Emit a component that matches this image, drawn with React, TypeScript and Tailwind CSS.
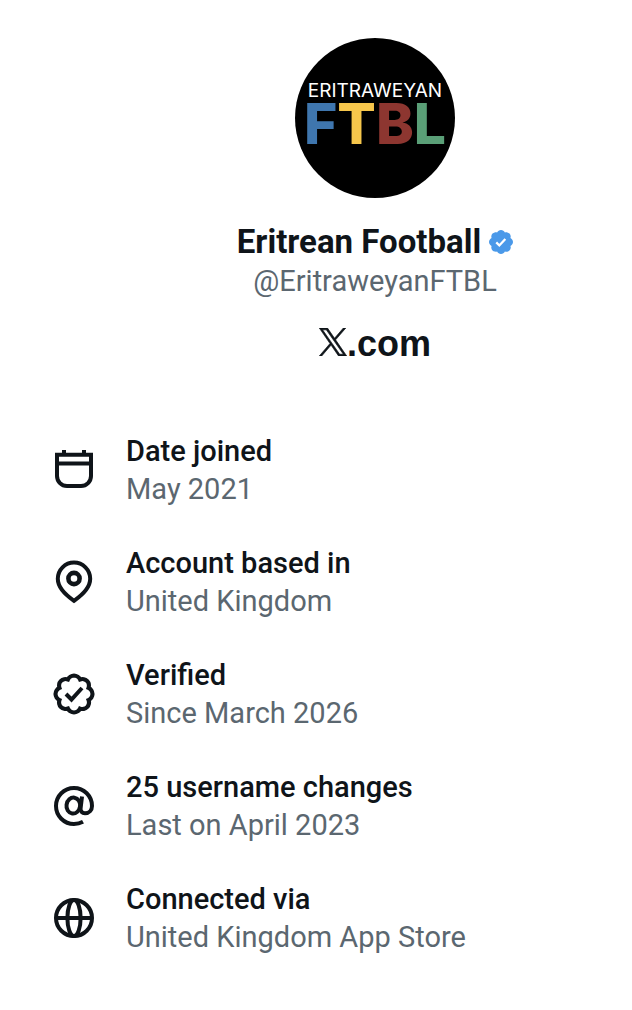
import React from 'react';

interface DetailItem {
  id: string;
  title: string;
  value: string;
  icon: React.ReactNode;
}

const BADGE_OUTLINE =
  'M20.396 11c-.018-.646-.215-1.275-.57-1.816-.354-.54-.852-.972-1.438-1.246.223-.607.27-1.264.14-1.897-.131-.634-.437-1.218-.882-1.687-.47-.445-1.053-.75-1.687-.882-.633-.13-1.29-.083-1.897.14-.273-.587-.704-1.086-1.245-1.44S11.647 1.62 11 1.604c-.646.017-1.273.213-1.813.568s-.969.854-1.24 1.44c-.608-.223-1.267-.272-1.902-.14-.635.13-1.22.436-1.69.882-.445.47-.749 1.055-.878 1.688-.13.633-.08 1.29.144 1.896-.587.274-1.087.705-1.443 1.245-.356.54-.555 1.17-.574 1.817.02.647.218 1.276.574 1.817.356.54.856.972 1.443 1.245-.224.606-.274 1.263-.144 1.896.13.634.433 1.218.877 1.688.47.443 1.054.747 1.687.878.633.132 1.29.084 1.897-.136.274.586.705 1.084 1.246 1.439.54.354 1.17.551 1.816.569.647-.016 1.276-.213 1.817-.567s.972-.854 1.245-1.44c.604.239 1.266.296 1.903.164.636-.132 1.22-.447 1.68-.907.46-.46.776-1.044.908-1.681s.075-1.299-.165-1.903c.586-.274 1.084-.705 1.439-1.246.354-.54.551-1.17.569-1.816z';

const Icon: React.FC<{ children: React.ReactNode }> = ({ children }) => (
  <svg
    viewBox="0 0 48 48"
    className="size-12 flex-none"
    fill="none"
    stroke="currentColor"
    strokeWidth="4"
    aria-hidden="true"
  >
    {children}
  </svg>
);

const CalendarIcon = () => (
  <Icon>
    <path d="M7 8.7h34V30a10 10 0 0 1-10 10H17a10 10 0 0 1-10-10z" />
    <path d="M7 17.5h34M14 4v4M34 4v4" />
  </Icon>
);

const PinIcon = () => (
  <Icon>
    <path d="M24 42.8C18.5 39 7.8 31 7.8 20.8a16.2 16.2 0 0 1 32.4 0C40.2 31 29.5 39 24 42.8z" />
    <circle cx="24" cy="20.5" r="5.6" strokeWidth="4.6" />
  </Icon>
);

const VerifiedIcon = () => (
  <Icon>
    <path d={BADGE_OUTLINE} transform="translate(2.33 2.33) scale(1.97)" strokeWidth="2.1" />
    <path d="m16 24 5.5 5.5 10.5-11.5" />
  </Icon>
);

const AtIcon = () => (
  <Icon>
    <ellipse cx="23.3" cy="23.6" rx="6.8" ry="8" transform="rotate(8 23.3 23.6)" />
    <path d="m32 14.5-1.4 11.7c-.3 3 1.5 5.1 4.4 5.1 4.2 0 7-3.1 7-7.3A18 18 0 1 0 24 42c3.3 0 6.2-.7 9-2.2" />
  </Icon>
);

const GlobeIcon = () => (
  <Icon>
    <circle cx="24" cy="24" r="18" />
    <ellipse cx="24" cy="24" rx="6.6" ry="18" />
    <path d="M6 24h36" />
  </Icon>
);

const VerifiedBadge = () => (
  <svg viewBox="1.6 1.6 18.8 18.8" className="size-6 flex-none" role="img" aria-label="Verified account">
    <path d={BADGE_OUTLINE} fill="#4a99e9" />
    <path d="m7.3 11.3 2.4 2.4 4.7-5.1" fill="none" stroke="#fff" strokeWidth="1.8" />
  </svg>
);

const XLogo = () => (
  <svg
    viewBox="0 0 1200 1227"
    className="size-7 flex-none"
    fill="currentColor"
    stroke="currentColor"
    strokeWidth="30"
    role="img"
    aria-label="X"
  >
    <path d="M714.163 519.284L1160.89 0H1055.03L667.137 450.887L357.328 0H0L468.492 681.821L0 1226.37H105.866L515.491 750.218L842.672 1226.37H1200L714.137 519.284H714.163ZM569.165 687.828L521.697 619.934L144.011 79.694H306.615L611.412 515.685L658.88 583.579L1055.08 1150.3H892.476L569.165 687.854V687.828Z" />
  </svg>
);

const Avatar = () => (
  <div className="flex size-40 flex-col items-center overflow-hidden rounded-full bg-black pt-[43px] font-['Inter',sans-serif] whitespace-nowrap">
    <span className="text-[19px] leading-5 text-white">ERITRAWEYAN</span>
    <span className="text-[57px] leading-[46px] font-extrabold">
      <span className="text-[#3f76ae]">F</span>
      <span className="text-[#f6c64b]">T</span>
      <span className="text-[#8d3630]">B</span>
      <span className="text-[#5a9f77]">L</span>
    </span>
  </div>
);

const details: DetailItem[] = [
  { id: 'joined', title: 'Date joined', value: 'May 2021', icon: <CalendarIcon /> },
  { id: 'location', title: 'Account based in', value: 'United Kingdom', icon: <PinIcon /> },
  { id: 'verified', title: 'Verified', value: 'Since March 2026', icon: <VerifiedIcon /> },
  { id: 'username', title: '25 username changes', value: 'Last on April 2023', icon: <AtIcon /> },
  { id: 'source', title: 'Connected via', value: 'United Kingdom App Store', icon: <GlobeIcon /> },
];

const DetailRow: React.FC<{ item: DetailItem }> = ({ item }) => (
  <li className="flex items-center gap-7">
    {item.icon}
    <div className="text-[29px] leading-[38px]">
      <h2 className="font-medium">{item.title}</h2>
      <p className="text-[#5b6770]">{item.value}</p>
    </div>
  </li>
);

export default function App() {
  return (
    <main className="min-h-screen bg-white pt-[38px] pb-12 font-['Roboto',sans-serif] text-[#0f1419]">
      <header className="flex flex-col items-center pl-[118px]">
        <Avatar />
        <div className="mt-6 flex items-center gap-2">
          <h1 className="text-[33px] leading-10 font-bold">Eritrean Football</h1>
          <VerifiedBadge />
        </div>
        <p className="text-[29px] leading-[38px] text-[#5b6770]">@EritraweyanFTBL</p>
        <div className="mt-6 flex items-baseline font-['Liberation_Sans',Arial,sans-serif] text-[36px] leading-10 font-bold">
          <XLogo />
          <span>.com</span>
        </div>
      </header>

      <ul className="mt-[68px] flex flex-col gap-9 pr-6 pl-[50px]">
        {details.map((item) => (
          <DetailRow key={item.id} item={item} />
        ))}
      </ul>
    </main>
  );
}
